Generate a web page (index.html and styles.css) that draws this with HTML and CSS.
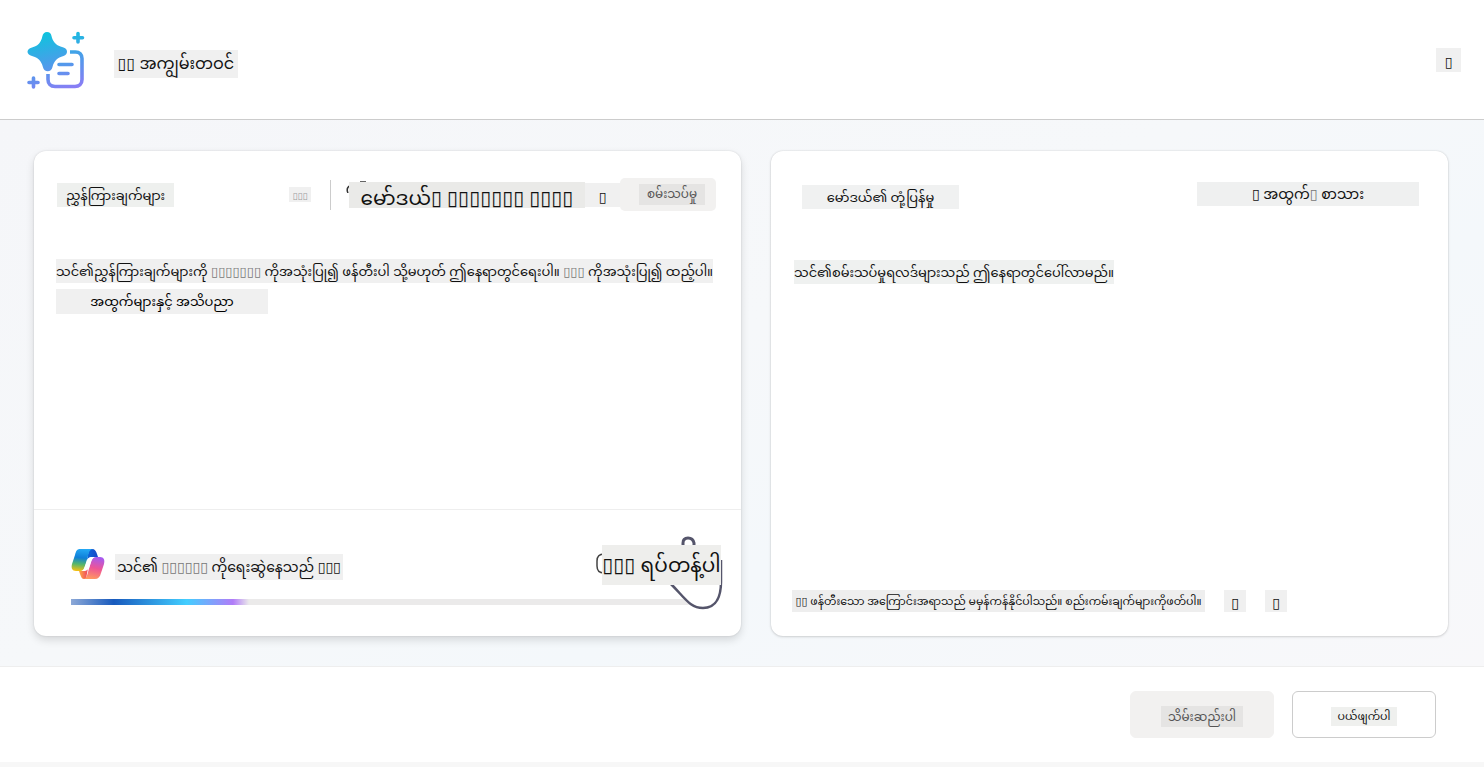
FILE: index.html
```html
<!DOCTYPE html>
<html lang="my">
<head>
<meta charset="utf-8">
<title>▯▯ အကျွမ်းတဝင်</title>
<link rel="stylesheet" href="styles.css">
</head>
<body>
<header class="topbar">
  <svg class="brand-icon" viewBox="0 0 60 60" aria-hidden="true">
    <defs><linearGradient id="brand" gradientUnits="userSpaceOnUse" x1="24" y1="0" x2="40" y2="60"><stop offset="0" stop-color="#0cc5dd"/><stop offset=".5" stop-color="#489fe9"/><stop offset="1" stop-color="#8a7df5"/></linearGradient></defs>
    <path fill="url(#brand)" d="M21 2c2.600 0 4 1.500 4.500 4 1 5 4 9 9 10.500l3 1c2.600.8 3.500 2.500 3.500 4.300s-1.100 3.600-3.500 4.300c-6 1.500-9.500 5-11 10.900-.8 2.900-2.500 4.200-4.800 4.200s-4-1.300-4.800-4.200C15.400 31 12 27.500 6 26c-3-.8-4.500-2.300-4.500-4.200S3 18.200 6 17.500c6-1.500 9-5 10.300-11C17 3.500 18.400 2 21 2z"/>
    <g fill="none" stroke="url(#brand)" stroke-width="3.600" stroke-linecap="round">
      <path stroke-linecap="butt" d="M44 22h5.500c4 0 6.500 2.600 6.500 6.500v21c0 4.500-3 7-7 7H29c-4.500 0-7-3-7-7V44"/>
      <path d="M33 34.500h13M33 43.500h9M52 3.500v8.500M48 7.800h8.500M7.500 48v9M3 52.500h9"/>
    </g>
  </svg>
  <h1 class="tag title">▯▯ အကျွမ်းတဝင်</h1>
  <button class="tag close" type="button" aria-label="ပိတ်ပါ">▯</button>
</header>
<main class="workspace">
  <section class="card">
    <div class="toolbar">
      <h2 class="tag prompt-title">ညွှန်ကြားချက်များ</h2>
      <span class="tag count">▯▯▯</span>
      <div class="model">
        <svg class="model-edge" viewBox="0 0 22 12" aria-hidden="true"><path d="M4 5Q1 8 3 12M15 1h6" fill="none" stroke="#333" stroke-width="1.500"/></svg>
        <button class="tag model-button" type="button">မော်ဒယ်▯ ▯▯▯▯▯▯▯ ▯▯▯▯</button>
      </div>
      <button class="tag settings" type="button">▯</button>
      <button class="test" type="button"><span class="tag">စမ်းသပ်မှု</span></button>
    </div>
    <div class="prompt">
      <p class="tag prompt-text">သင်၏ညွှန်ကြားချက်များကို <span class="dim">▯▯▯▯▯▯▯</span> ကိုအသုံးပြု၍ ဖန်တီးပါ သို့မဟုတ် ဤနေရာတွင်ရေးပါ။ <span class="dim">▯▯▯</span> ကိုအသုံးပြု၍ ထည့်ပါ။</p>
      <a class="tag knowledge" href="#">အထွက်များနှင့် အသိပညာ</a>
    </div>
    <div class="progress-area">
      <div class="status-row">
        <svg class="copilot" viewBox="0 0 34 32" aria-hidden="true">
          <defs>
            <linearGradient id="blue" x1=".5" y1="0" x2=".4" y2="1"><stop stop-color="#24a8f4"/><stop offset=".4" stop-color="#0f7fd8"/><stop offset=".7" stop-color="#56b66c"/><stop offset="1" stop-color="#f2c014"/></linearGradient>
            <linearGradient id="pink" x1=".6" y1="0" x2=".4" y2="1"><stop stop-color="#a65af0"/><stop offset=".5" stop-color="#ee5596"/><stop offset="1" stop-color="#ff9960"/></linearGradient>
            <linearGradient id="navy"><stop stop-color="#0d68dc"/><stop offset="1" stop-color="#1747c6"/></linearGradient>
            <linearGradient id="red"><stop stop-color="#ffad43"/><stop offset="1" stop-color="#ed4262"/></linearGradient>
          </defs>
          <path fill="url(#navy)" d="M18 1h3c3 0 4 2 5 5l1 3h-6c-2 0-4 1-5 3z"/>
          <path fill="url(#red)" d="M8 23h4c2 0 4-1 5-3l-2 11h-2c-2 0-3-2-4-5z"/>
          <path fill="url(#blue)" d="M9 1h13c-3 0-4 3-5 7l-3 10c-1 3-2 5-5 5H5c-4 0-5-3-4-7L4 7c1-4 2-6 5-6z"/>
          <path fill="url(#pink)" d="M25 9h4c4 0 5 3 4 7l-3 9c-1 4-3 6-6 6H12c3 0 4-3 5-7l3-10c1-3 2-5 5-5z"/>
          <path fill="#fff" d="M21 9h4c-3 0-4 2-5 5l-2 6c-1 2-3 3-5 3h-3c2 0 3-2 4-5l2-5c1-3 2-4 5-4z"/>
        </svg>
        <label class="tag status" for="draft-progress">သင်၏ <span class="dim">▯▯▯▯▯▯</span> ကိုရေးဆွဲနေသည် ▯▯▯</label>
        <div class="stop-wrap">
          <svg class="stop-curl" viewBox="0 0 130 76" aria-hidden="true"><g fill="#fff" stroke="#55556b"><path stroke-width="3" d="M87 12V8q0-5 5-5t6 5v4"/><path stroke-width="2.500" d="M74 48C90 64 94 73 107 73C121 73 125 60 125 47V25"/><path stroke="#444" stroke-width="1.500" d="M8 19q-7 0-7 7v5q0 7 7 7"/></g></svg>
          <button class="tag stop" type="button">▯▯▯ ရပ်တန့်ပါ</button>
        </div>
      </div>
      <progress class="bar" id="draft-progress" max="650" value="184"></progress>
    </div>
  </section>
  <section class="card response">
    <div class="response-head">
      <h2 class="tag response-title">မော်ဒယ်၏ တုံ့ပြန်မှု</h2>
      <button class="tag output" type="button">▯ အထွက်<span class="dim">▯</span> စာသား</button>
    </div>
    <p class="tag response-text">သင်၏စမ်းသပ်မှုရလဒ်များသည် ဤနေရာတွင်ပေါ်လာမည်။</p>
    <div class="feedback">
      <p class="tag notice">▯▯ ဖန်တီးသော အကြောင်းအရာသည် မမှန်ကန်နိုင်ပါသည်။ စည်းကမ်းချက်များကိုဖတ်ပါ။</p>
      <button class="tag vote" type="button">▯</button>
      <button class="tag vote" type="button">▯</button>
    </div>
  </section>
</main>
<footer class="actions">
  <button class="action save" type="button"><span class="tag">သိမ်းဆည်းပါ</span></button>
  <button class="action" type="button"><span class="tag">ပယ်ဖျက်ပါ</span></button>
</footer>
</body>
</html>
```
FILE: styles.css
```css
* { box-sizing: border-box; }
body {
  margin: 0;
  min-height: 100vh;
  display: flex;
  flex-direction: column;
  background: #f7f7f7;
  color: #111;
  font-family: "Noto Sans Myanmar", "Noto Sans", "DejaVu Sans", sans-serif;
  font-size: 13px;
}
h1, h2, p { margin: 0; font-weight: 400; }
button { font: inherit; color: inherit; border: 0; padding: 0; cursor: pointer; }
.tag {
  background: #f0f0f0;
  height: 24px;
  line-height: 28px;
  white-space: nowrap;
  text-align: center;
}
.dim { color: #777; }

.topbar {
  height: 120px;
  padding: 0 23px 0 26px;
  display: flex;
  align-items: center;
  background: #fff;
  border-bottom: 1px solid #ccc;
}
.brand-icon { width: 60px; height: 60px; }
.title { width: 124px; height: 28px; line-height: 32px; margin: 8px 0 0 28px; font-size: 16px; }
.close { width: 25px; margin-left: auto; line-height: 32px; font-size: 14px; }

.workspace {
  flex: 1;
  padding: 31px 36px 30px 34px;
  display: grid;
  grid-template-columns: 707fr 677fr;
  gap: 30px;
  background: linear-gradient(155deg, #f5f6f9 0%, #f6f8fa 45%, #f4f8fb 65%, #f8f8fa 100%);
}
.card {
  min-width: 0;
  display: flex;
  flex-direction: column;
  background: #fff;
  border-radius: 12px;
  box-shadow: 0 0 2px #0002, 0 4px 8px #0002;
}
.response { box-shadow: 0 0 2px #0002, 0 1px 3px #0002; }

.toolbar { display: flex; align-items: center; height: 87px; padding: 0 25px 0 23px; }
.prompt-title { width: 117px; font-size: 13px; background: #eef0ee; }
.count { width: 22px; height: 15px; line-height: 20px; margin: 0 19px 0 auto; font-size: 9px; color: #999; }
.model { position: relative; height: 30px; padding-left: 18px; border-left: 1px solid #ccc; }
.model-edge { position: absolute; left: 14px; top: 1px; width: 22px; height: 12px; }
.model-button { position: relative; width: 236px; height: 26px; line-height: 38px; margin-top: 2px; font-size: 20px; background: #eaeae8; }
.settings { width: 35px; line-height: 32px; font-size: 14px; }
.test { width: 96px; height: 33px; padding: 0 11px 0 19px; border-radius: 5px; background: #f2f1f0; color: #555; font-size: 12px; }
.test .tag { display: block; height: 21px; line-height: 22px; background: #e5e4e3; }

.prompt { flex: 1; display: flex; flex-direction: column; align-items: flex-start; gap: 6px; padding: 21px 22px; }
.prompt-text { min-width: 642px; }
.knowledge { width: 212px; height: 25px; color: #000; font-size: 13px; text-decoration: none; }

.progress-area { height: 127px; padding: 26px 20px 0 37px; border-top: 1px solid #eee; }
.status-row { display: flex; align-items: center; height: 63px; }
.copilot { width: 34px; height: 32px; margin: -8px 10px 0 0; }
.status { width: 228px; height: 26px; margin-top: -2px; line-height: 30px; font-size: 14px; }
.stop-wrap { position: relative; width: 119px; margin: -5px 0 0 auto; }
.stop-curl { position: absolute; left: -6px; top: -10px; width: 130px; height: 76px; }
.stop { position: relative; width: 119px; height: 40px; line-height: 46px; font-size: 20px; background: #eeeeec; }
.bar { display: block; width: calc(100% - 20px); height: 6px; appearance: none; border: 0; background: #ebeaea; }
.bar::-webkit-progress-bar { background: #ebeaea; }
.bar::-webkit-progress-value { background: linear-gradient(90deg, #8da9d7, #185abd 24%, #43ceff 65%, #b17cf8 91%, #ebeaea); }

.response-head { display: flex; align-items: center; justify-content: space-between; height: 85px; padding: 0 29px 0 31px; }
.response-title { width: 157px; margin-top: 6px; font-size: 13px; background: #f0f1f1; }
.output { width: 222px; font-size: 14px; background: #eff0f0; }
.response-text { align-self: flex-start; min-width: 307px; margin: 24px 0 0 23px; background: #eff1f0; }
.feedback { display: flex; align-items: center; margin-top: auto; padding: 0 21px 24px; gap: 19px; }
.notice { width: 413px; height: 22px; line-height: 24px; font-size: 11px; background: #eee; }
.vote { width: 22px; height: 22px; line-height: 30px; font-size: 14px; }

.actions {
  height: 96px;
  margin-bottom: 5px;
  padding: 0 48px;
  display: flex;
  justify-content: flex-end;
  align-items: center;
  gap: 18px;
  background: #fff;
  border-top: 1px solid #eee;
}
.action { width: 144px; height: 47px; border: 1px solid #ccc; border-radius: 6px; background: #fff; font-size: 11px; }
.action .tag { display: block; width: 66px; height: 19px; line-height: 20px; margin: 3px auto 0; background: #eff0ee; }
.save { border-color: #f2f1f0; background: #f2f1f0; color: #555; font-size: 12px; }
.save .tag { width: 82px; height: 21px; line-height: 24px; background: #e5e4e3; }
```
